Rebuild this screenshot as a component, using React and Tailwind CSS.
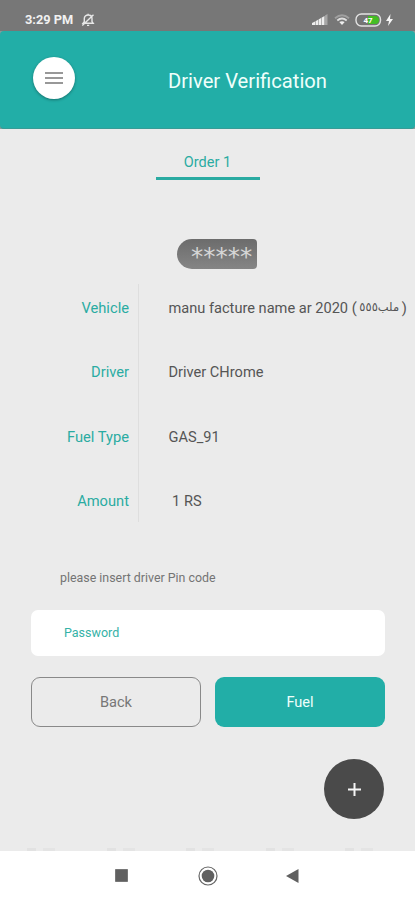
import { useState } from "react";

const details = [
  { label: "Vehicle", value: "vehicle" },
  { label: "Driver", value: "Driver CHrome" },
  { label: "Fuel Type", value: "GAS_91" },
  { label: "Amount", value: "\u00a01 RS" },
];

const StatusBar = () => (
  <div className="flex h-[31px] items-center bg-[#777] pl-[25px] pr-[22px] pt-[8px] text-[#f1f1f1]">
    <span className="w-[50px] whitespace-nowrap pt-[1px] text-[12.8px] font-bold leading-none">3:29 PM</span>
    <svg className="ml-[6px]" width="14" height="14" viewBox="0 0 14 14" fill="none" stroke="#e8e8e8" strokeWidth="1.4">
      <path d="M2 10.3h10.2L11 8.6V5.5C11 3.4 9.3 2 7.1 2S3.3 3.4 3.3 5.5v3.1L2 10.3zM6 12.4h2.2M7.1 2V.8M1.3 12.5 12.5 1.8" />
    </svg>
    <svg className="ml-auto" width="16" height="11" viewBox="0 0 16 11" fill="#eee">
      <path d="M0 9 3 7.4V11H0zM3.5 7.2 6 5.8V11H3.5zM6.5 5.5 9 4v7H6.5zM9.5 3.7l3-1.8V11h-3z" />
      <path d="M13 1.5 15.5 0v11H13z" opacity=".4" />
    </svg>
    <svg className="ml-[6px]" width="16" height="12" viewBox="0 0 16 12" fill="none" strokeWidth="1.8">
      <path d="M1 4.2Q8-1.8 15 4.2" stroke="#a0a0a0" />
      <path d="M3.3 6.5Q8 2.5 12.7 6.5" stroke="#dedede" />
      <path d="M5.3 8.1Q8 6.2 10.7 8.1L8 11z" fill="#eee" stroke="none" />
    </svg>
    <svg className="ml-[5px]" width="27" height="14" viewBox="0 0 27 14">
      <rect x="1" y="1" width="24.5" height="12" rx="5.5" fill="#747474" stroke="#e2e2e2" strokeWidth="1.4" />
      <path d="M13 3h7a4 4 0 0 1 0 8h-7z" fill="#43bd24" />
      <text x="8.5" y="10" fontSize="8" fontWeight="700" fill="#fff">47</text>
    </svg>
    <svg className="ml-[4px]" width="7" height="12" viewBox="0 0 7 12" fill="#f5f5f5">
      <path d="M4.5 0 0 7h3l-1 5 5-7H4z" />
    </svg>
  </div>
);

const Header = () => (
  <div className="bg-[#8a9a99]">
    <header className="flex h-[98px] items-center rounded-[4px] border-b border-[#379c96] bg-[#22aea7] pl-[33px]">
      <button
        type="button"
        aria-label="Menu"
        className="mb-[4px] flex h-[42px] w-[42px] items-center justify-center rounded-full bg-white shadow-[0_1px_3px_rgba(0,0,0,0.35)]"
      >
        <svg width="18" height="12" viewBox="0 0 18 12" stroke="#777" strokeWidth="1.3">
          <path d="M0 1h18M0 6h18M0 11h18" />
        </svg>
      </button>
      <h1 className="ml-[93px] w-[162px] whitespace-nowrap pt-[2px] text-[20.2px] leading-6 text-[#effffb]">
        Driver Verification
      </h1>
    </header>
  </div>
);

const App = () => {
  const [pin, setPin] = useState("");

  return (
    <div className="flex h-[900px] w-[415px] flex-col overflow-hidden bg-[#ebebeb] font-[Roboto,'DejaVu_Sans',sans-serif] text-[#555]">
      <StatusBar />
      <Header />

      <main className="flex h-[722px] flex-col">
        <div className="mx-auto mt-[22px] flex h-[29px] w-[104px] shrink-0 justify-center border-b-[3px] border-[#2aaba2] text-[14.5px] leading-[23px] text-[#2aaba2]">
          Order 1
        </div>

        <div className="ml-[177px] mt-[59px] h-[30px] w-[80px] shrink-0 rounded-l-[15px] rounded-r-[4px] bg-linear-to-b from-[#6c6c6c] to-[#858585] pl-[14px] font-['DejaVu_Sans',sans-serif] text-[24.5px] leading-[36px] text-[#d6d6d6]">
          *****
        </div>

        <div className="mt-[7px] flex h-[258px] shrink-0">
          <div className="flex w-[138px] flex-col pr-[9px] text-right text-[14.7px] text-[#2aaba2]">
            {details.map(({ label }) => (
              <div key={label} className="flex h-[64.5px] items-center justify-end pb-[1px]">
                {label}
              </div>
            ))}
          </div>
          <div className="mt-[8px] h-[238px] w-px bg-[#dedede]" />
          <div className="flex flex-col pl-[29.5px] text-[14.6px]">
            {details.map(({ label, value }) => (
              <div key={label} className="flex h-[64.5px] items-center whitespace-pre pt-[1px]">
                {value === "vehicle" ? (
                  <>
                    manu facture name ar 2020 (
                    <span dir="rtl" className="mx-[2px] w-[41px] pb-[2px] text-center font-['DejaVu_Sans',sans-serif] text-[11.5px]">ملب٥٥٥</span>
                    )
                  </>
                ) : (
                  value
                )}
              </div>
            ))}
          </div>
        </div>

        <p className="ml-[60px] mt-[34px] h-[20px] text-[12.4px] leading-5 text-[#747474]">
          please insert driver Pin code
        </p>

        <input
          type="password"
          value={pin}
          onChange={(e) => setPin(e.target.value)}
          placeholder="Password"
          className="ml-[31px] mt-[22px] h-[46px] w-[354px] shrink-0 rounded-[7px] bg-white px-[33px] pb-[2px] text-[12.5px] placeholder:text-[#35b2a7] focus:outline-none"
        />

        <div className="ml-[31px] mt-[21px] flex h-[50px] shrink-0 gap-[14px]">
          <button type="button" className="w-[170px] rounded-[9px] border border-[#898989] pt-[2px] text-[14.6px] text-[#777]">
            Back
          </button>
          <button type="button" className="w-[170px] rounded-[9px] bg-[#22aea7] pt-[2px] text-[14.6px] text-[#effffb]">
            Fuel
          </button>
        </div>

        <button
          type="button"
          aria-label="Add"
          className="ml-[324px] mt-[32px] flex h-[60px] w-[60px] shrink-0 items-center justify-center rounded-full bg-[#4a4a4a]"
        >
          <svg width="13" height="13" viewBox="0 0 13 13" stroke="#f5f5f5" strokeWidth="2">
            <path d="M6.5 0v13M0 6.5h13" />
          </svg>
        </button>

        {/* tops of the tab labels hidden behind the nav bar */}
        <div className="mt-auto flex justify-between pl-[27px] pr-[42px]">
          {[0, 1, 2, 3, 4].map((i) => (
            <div key={i} className="flex h-[3px] gap-[7px]">
              <span className="w-[9px] bg-[#e2e2e2]" />
              <span className="w-[12px] bg-[#e4e4e4]" />
            </div>
          ))}
        </div>
      </main>

      <nav className="flex h-[49px] items-center bg-white pl-[115px]">
        <svg width="13" height="13" viewBox="0 0 13 13">
          <path d="M.5.5h12v12H.5z" fill="#606060" stroke="#777" />
        </svg>
        <svg className="ml-[70px]" width="20" height="20" viewBox="0 0 20 20">
          <circle cx="10" cy="10" r="9" fill="white" stroke="#666" strokeWidth="1.2" />
          <circle cx="10" cy="10" r="6.3" fill="#606060" />
        </svg>
        <svg className="ml-[68px]" width="13" height="14" viewBox="0 0 13 14" fill="#606060">
          <path d="M12.5 0v14L0 7z" />
        </svg>
      </nav>
    </div>
  );
};

export default App;
